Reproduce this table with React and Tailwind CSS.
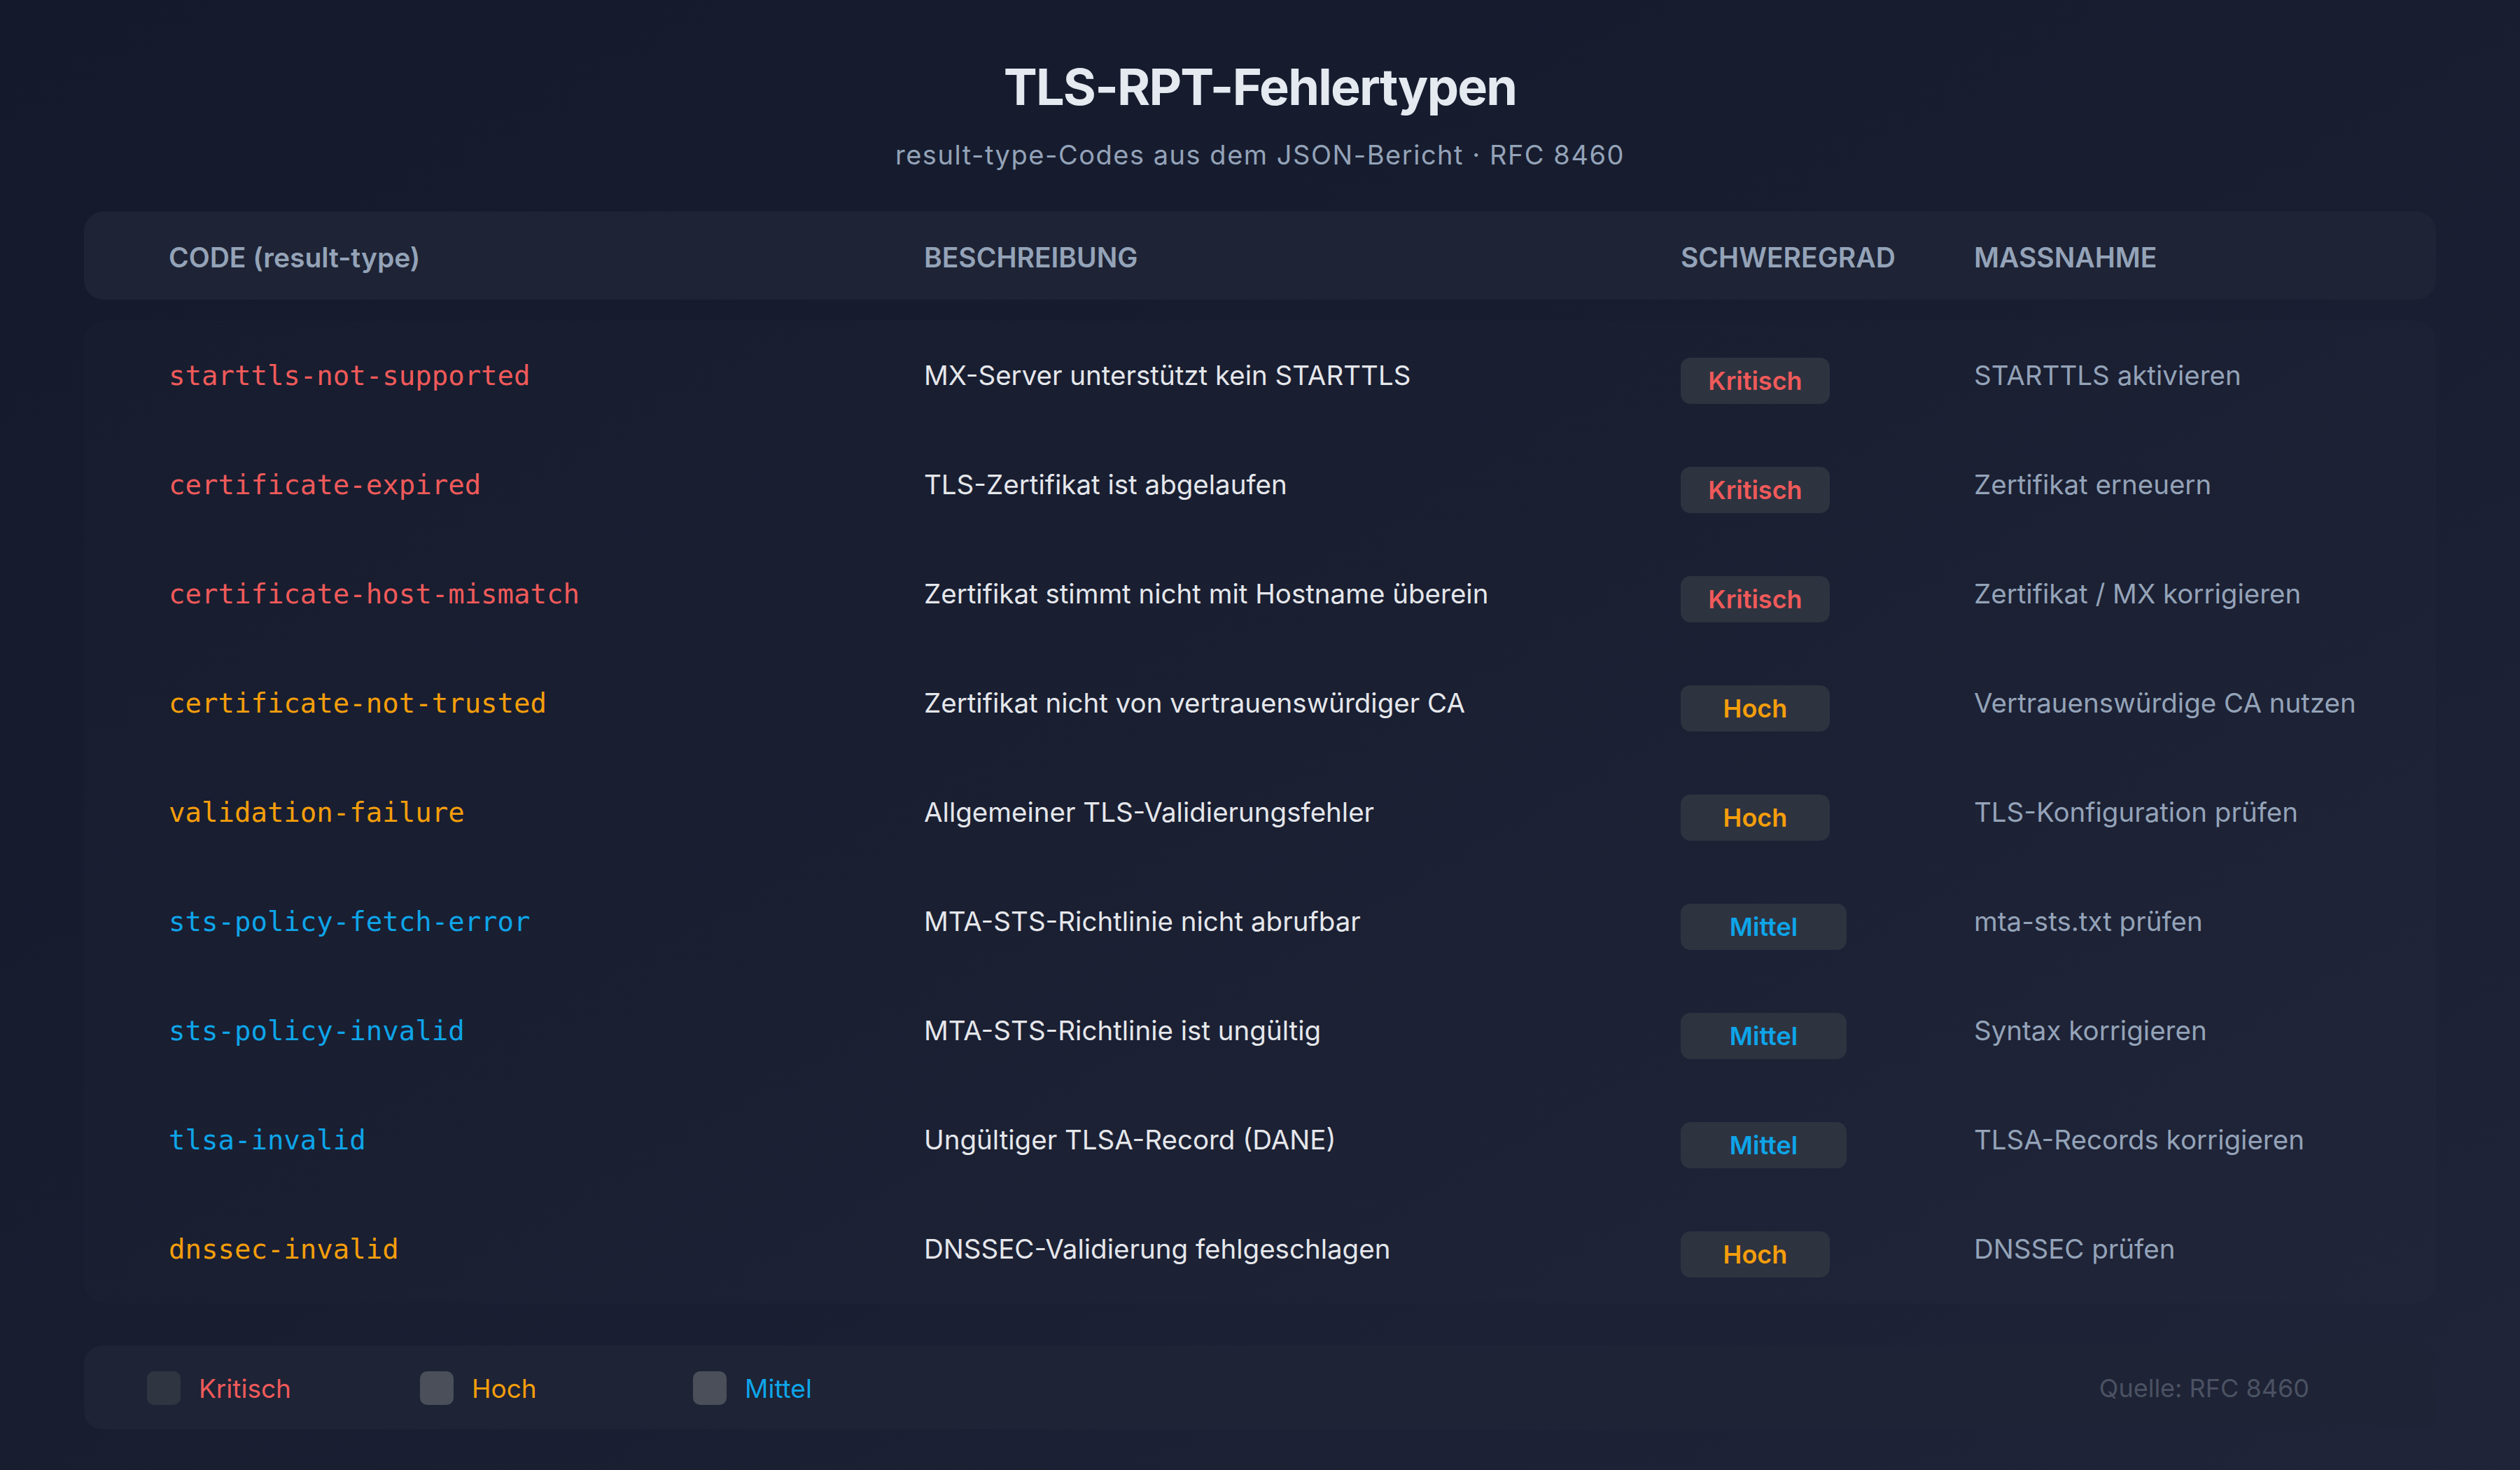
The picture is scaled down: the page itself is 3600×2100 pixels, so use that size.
import React from "react";

const rows = [
  { code: "starttls-not-supported", desc: "MX-Server unterstützt kein STARTTLS", level: "Kritisch", action: "STARTTLS aktivieren" },
  { code: "certificate-expired", desc: "TLS-Zertifikat ist abgelaufen", level: "Kritisch", action: "Zertifikat erneuern" },
  { code: "certificate-host-mismatch", desc: "Zertifikat stimmt nicht mit Hostname überein", level: "Kritisch", action: "Zertifikat / MX korrigieren" },
  { code: "certificate-not-trusted", desc: "Zertifikat nicht von vertrauenswürdiger CA", level: "Hoch", action: "Vertrauenswürdige CA nutzen" },
  { code: "validation-failure", desc: "Allgemeiner TLS-Validierungsfehler", level: "Hoch", action: "TLS-Konfiguration prüfen" },
  { code: "sts-policy-fetch-error", desc: "MTA-STS-Richtlinie nicht abrufbar", level: "Mittel", action: "mta-sts.txt prüfen" },
  { code: "sts-policy-invalid", desc: "MTA-STS-Richtlinie ist ungültig", level: "Mittel", action: "Syntax korrigieren" },
  { code: "tlsa-invalid", desc: "Ungültiger TLSA-Record (DANE)", level: "Mittel", action: "TLSA-Records korrigieren" },
  { code: "dnssec-invalid", desc: "DNSSEC-Validierung fehlgeschlagen", level: "Hoch", action: "DNSSEC prüfen" },
];

const levelText = {
  Kritisch: "text-[#f05a5a]",
  Hoch: "text-[#f59e0b]",
  Mittel: "text-[#0ea5e9]",
};

const badgeWidth = {
  Kritisch: "w-[213px]",
  Hoch: "w-[213px]",
  Mittel: "w-[237px]",
};

function Badge({ level }) {
  return (
    <div
      className={`mt-[16px] h-[66px] ${badgeWidth[level]} rounded-[14px] bg-[#2e3340] flex items-center justify-center text-[36px] font-semibold leading-none ${levelText[level]}`}
    >
      {level}
    </div>
  );
}

function Row({ row }) {
  return (
    <div className="grid grid-cols-[1079px_1081px_419px_1fr] items-center h-[156px] pl-[121px]">
      <div
        className={`text-[39px] leading-none ${levelText[row.level]}`}
        style={{ fontFamily: "'DejaVu Sans Mono', monospace" }}
      >
        {row.code}
      </div>
      <div className="text-[38.5px] leading-none text-[#e5e7eb]">{row.desc}</div>
      <div>
        <Badge level={row.level} />
      </div>
      <div className="text-[38.5px] leading-none text-[#94a3b8]">{row.action}</div>
    </div>
  );
}

function LegendItem({ level, swatch }) {
  return (
    <div className="w-[390px] flex items-center gap-[26px]">
      <div className={`w-[48px] h-[48px] rounded-[10px] ${swatch}`} />
      <span className={`text-[37px] leading-none ${levelText[level]}`}>{level}</span>
    </div>
  );
}

export default function App() {
  return (
    <div
      className="w-[3600px] h-[2100px] bg-linear-to-br from-[#141a2c] via-[#181d30] to-[#1f2438] px-[120px] flex flex-col"
      style={{ fontFamily: "Inter, 'Liberation Sans', sans-serif" }}
    >
      {/* title */}
      <div className="pt-[88px] flex flex-col items-center">
        <h1 className="text-[72px] leading-none font-bold tracking-tight text-[#e5e9f0]">TLS-RPT-Fehlertypen</h1>
        <p className="mt-[42px] text-[38px] leading-none tracking-[0.04em] text-[#94a3b8]">
          result-type-Codes aus dem JSON-Bericht · RFC 8460
        </p>
      </div>

      {/* table header */}
      <div className="mt-[62px] h-[126px] pt-[4px] rounded-[28px] bg-[#1e2335] grid grid-cols-[1079px_1081px_419px_1fr] items-center pl-[121px] text-[39px] leading-none font-semibold text-[#94a3b8]">
        <div>CODE (result-type)</div>
        <div>BESCHREIBUNG</div>
        <div>SCHWEREGRAD</div>
        <div>MASSNAHME</div>
      </div>

      {/* rows */}
      <div className="mt-[30px] rounded-[30px] bg-white/[0.012]">
        {rows.map((row) => (
          <Row key={row.code} row={row} />
        ))}
      </div>

      {/* legend */}
      <div className="mt-[60px] h-[120px] pt-[2px] rounded-[26px] bg-[#1e2335] flex items-center pl-[90px] pr-[181px]">
        <LegendItem level="Kritisch" swatch="bg-[#2f3541]" />
        <LegendItem level="Hoch" swatch="bg-[#4a4f5a]" />
        <LegendItem level="Mittel" swatch="bg-[#4a4f5a]" />
        <div className="ml-auto text-[36px] leading-none text-[#4b5263]">Quelle: RFC 8460</div>
      </div>
    </div>
  );
}
